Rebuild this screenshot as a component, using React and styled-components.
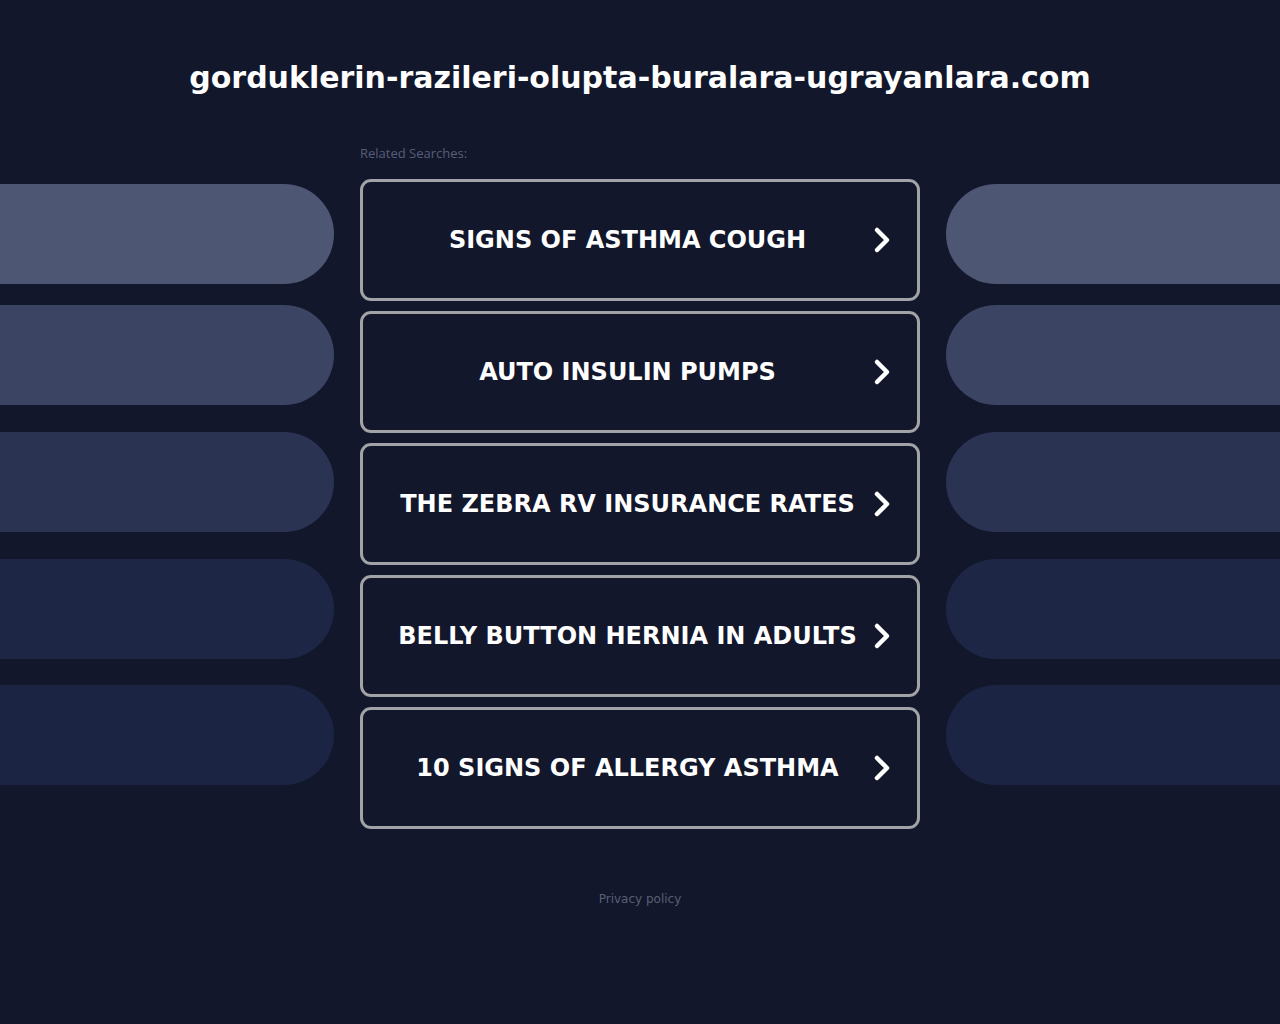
import React from 'react';
import styled, { createGlobalStyle } from 'styled-components';

const GlobalStyle = createGlobalStyle`
    html, body {
        margin: 0;
        padding: 0;
        background: #12172c;
    }
    body {
        font-family: 'DejaVu Sans', 'Liberation Sans', sans-serif;
        min-height: 1024px;
    }
`;

const searches = [
    'SIGNS OF ASTHMA COUGH',
    'AUTO INSULIN PUMPS',
    'THE ZEBRA RV INSURANCE RATES',
    'BELLY BUTTON HERNIA IN ADULTS',
    '10 SIGNS OF ALLERGY ASTHMA'
];

// side pills fade out from top to bottom
const pills = [
    { color: '#4d5673', offset: 0 },
    { color: '#3b4462', offset: 21 },
    { color: '#2b3352', offset: 27 },
    { color: '#1e2645', offset: 27 },
    { color: '#1c2444', offset: 26 }
];

const Page = styled.div`
    width: 1280px;
    min-height: 1024px;
    background: #12172c;
    color: #fff;
`;

const Title = styled.h1`
    margin: 0;
    padding-top: 60px;
    font-size: 30px;
    line-height: 36px;
    font-weight: 700;
    text-align: center;
    color: #ffffff;
`;

const Main = styled.div`
    display: grid;
    grid-template-columns: 1fr 560px 1fr;
    column-gap: 26px;
    margin-top: 49px;
`;

const Side = styled.div`
    display: flex;
    flex-direction: column;
    padding-top: 39px;
`;

const Pill = styled.div`
    height: 100px;
    margin-top: ${props => props.offset}px;
    background: ${props => props.color};
    border-radius: ${props => (props.side === 'left' ? '0 50px 50px 0' : '50px 0 0 50px')};
`;

const Center = styled.div`
    display: flex;
    flex-direction: column;
`;

const Label = styled.div`
    font-family: 'Open Sans', 'Noto Sans', sans-serif;
    font-size: 13px;
    line-height: 16px;
    color: #585e77;
    margin-bottom: 18px;
`;

const List = styled.div`
    display: flex;
    flex-direction: column;
    gap: 10px;
`;

const SearchLink = styled.a`
    display: grid;
    align-items: center;
    height: 122px;
    box-sizing: border-box;
    padding-right: 25px;
    border: 3px solid #a2a3a7;
    border-radius: 11px;
    color: #ffffff;
    text-decoration: none;
    cursor: pointer;

    > * {
        grid-area: 1 / 1;
    }
`;

const SearchText = styled.span`
    justify-self: center;
    font-size: 24px;
    font-weight: 700;
    white-space: nowrap;
`;

const Chevron = styled.svg`
    justify-self: end;
    width: 20px;
    height: 28px;
`;

const Footer = styled.div`
    margin-top: 62px;
    text-align: center;
    font-size: 12px;
    line-height: 16px;
    color: #5a5f74;
`;

function SideColumn ({ side }) {
    return (
        <Side>
            {pills.map((p, i) => (
                <Pill key={i} side={side} color={p.color} offset={p.offset}/>
            ))}
        </Side>
    );
}

export default function App () {
    return (
        <Page>
            <GlobalStyle/>
            <Title>gorduklerin-razileri-olupta-buralara-ugrayanlara.com</Title>
            <Main>
                <SideColumn side='left'/>
                <Center>
                    <Label>Related Searches:</Label>
                    <List>
                        {searches.map(s => (
                            <SearchLink key={s}>
                                <SearchText>{s}</SearchText>
                                <Chevron viewBox='0 0 20 28'>
                                    <polyline points='5,4 15,14 5,24' fill='none' stroke='#fff' strokeWidth='4.5' strokeLinecap='round' strokeLinejoin='round'/>
                                </Chevron>
                            </SearchLink>
                        ))}
                    </List>
                </Center>
                <SideColumn side='right'/>
            </Main>
            <Footer>Privacy policy</Footer>
        </Page>
    );
}
